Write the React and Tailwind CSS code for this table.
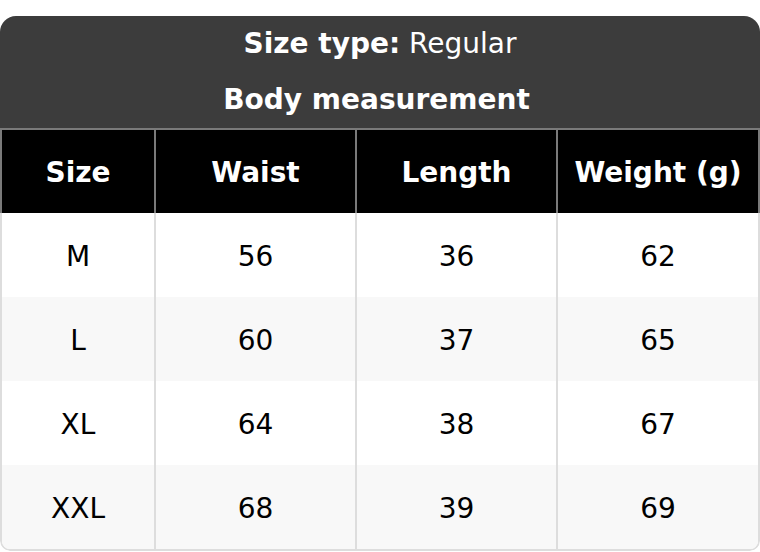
import React from 'react';

const columns = ['Size', 'Waist', 'Length', 'Weight (g)'];

const rows = [
  ['M', '56', '36', '62'],
  ['L', '60', '37', '65'],
  ['XL', '64', '38', '67'],
  ['XXL', '68', '39', '69'],
];

const App = () => {
  return (
    <div className="w-[760px] h-[552px] bg-white pt-4" style={{ fontFamily: '"DejaVu Sans", Verdana, sans-serif' }}>
      <div className="rounded-t-[16px] rounded-b-[10px] overflow-hidden">
        {/* Title block */}
        <div className="bg-[#3c3c3c] text-white text-[28px] text-center">
          <div className="h-14 leading-[56px]">
            <span className="font-bold">Size type:</span> Regular
          </div>
          <div className="h-14 leading-[56px] font-bold pr-[7px]">Body measurement</div>
        </div>

        {/* Column headings */}
        <div className="grid grid-cols-[152px_201px_201px_1fr] bg-black text-white font-bold text-[28px] border-t-2 border-x-2 border-[#7a7a7a]">
          {columns.map((c, i) => (
            <div
              key={c}
              className={`h-[83px] pt-[2px] flex items-center justify-center ${i > 0 ? 'border-l-2 border-[#7a7a7a]' : ''}`}
            >
              {c}
            </div>
          ))}
        </div>

        {/* Body rows */}
        <div className="border-x-2 border-b-2 border-[#dddddd] rounded-b-[10px] overflow-hidden">
          {rows.map((row, r) => (
            <div
              key={row[0]}
              className={`grid grid-cols-[152px_201px_201px_1fr] text-[28px] text-black ${r % 2 === 1 ? 'bg-[#f8f8f8]' : 'bg-white'}`}
            >
              {row.map((cell, i) => (
                <div
                  key={i}
                  className={`h-[84px] pt-[3px] flex items-center justify-center ${i > 0 ? 'border-l-2 border-[#dddddd]' : ''}`}
                >
                  {cell}
                </div>
              ))}
            </div>
          ))}
        </div>
      </div>
    </div>
  );
};

export default App;
